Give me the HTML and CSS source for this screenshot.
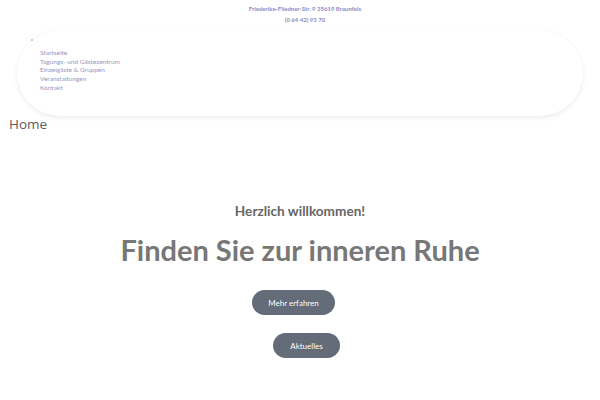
FILE: index.html
```html
<!DOCTYPE html>
<html lang="de">
<head>
<meta charset="utf-8">
<link rel="stylesheet" href="styles.css">
</head>
<body>
<header class="topbar">
  <div class="address">Friederike-Fliedner-Str. 9 35619 Braunfels</div>
  <div class="phone">(0 64 42) 93 70</div>
</header>
<nav class="navcard">
  <span class="dot"></span>
  <ul class="menu">
    <li>Startseite</li>
    <li>Tagungs- und Gästezentrum</li>
    <li>Einzelgäste &amp; Gruppen</li>
    <li>Veranstaltungen</li>
    <li>Kontakt</li>
  </ul>
</nav>
<h1 class="pagetitle">Home</h1>
<main class="hero">
  <h2 class="welcome">Herzlich willkommen!</h2>
  <h3 class="headline">Finden Sie zur inneren Ruhe</h3>
  <a class="btn btn-more">Mehr erfahren</a>
  <a class="btn btn-news">Aktuelles</a>
</main>
</body>
</html>
```
FILE: styles.css
```css
html, body {
  margin: 0;
  padding: 0;
  background: #ffffff;
  font-family: Lato, "Open Sans", sans-serif;
}
.topbar {
  display: flex;
  flex-direction: column;
  align-items: center;
  padding-top: 3px;
  padding-left: 10px;
  color: #8f89c4;
  font-weight: 700;
  font-size: 6px;
  line-height: 11px;
}
.navcard {
  position: relative;
  margin: 5px 17px 0 17px;
  height: 86px;
  border-radius: 43px;
  background: #fff;
  box-shadow: 0 2px 5px rgba(0,0,0,0.07), 0 0 1px rgba(0,0,0,0.05);
  box-sizing: border-box;
  padding: 19px 0 0 23px;
}
.dot {
  position: absolute;
  left: 14px;
  top: 9px;
  width: 2px;
  height: 2px;
  border-radius: 50%;
  background: #b8b6c8;
}
.menu {
  list-style: none;
  margin: 0;
  padding: 0;
  font-size: 6.5px;
  line-height: 8.7px;
  font-weight: 400;
  color: #9a96bc;
}
.pagetitle {
  margin: 0;
  padding: 0 0 0 9px;
  font-family: "Open Sans", sans-serif;
  font-weight: 400;
  font-size: 13.5px;
  line-height: 17px;
  color: #5a5a5a;
}
.hero {
  display: flex;
  flex-direction: column;
  align-items: center;
  padding-top: 69px;
}
.welcome {
  margin: 0;
  font-size: 13.6px;
  line-height: 18px;
  font-weight: 700;
  color: #666;
}
.headline {
  margin: 11px 0 0 0;
  font-size: 29px;
  line-height: 38px;
  font-weight: 700;
  color: #777;
}
.btn {
  display: flex;
  align-items: center;
  justify-content: center;
  height: 25px;
  border-radius: 13px;
  background: #646b79;
  color: #fff;
  font-size: 8px;
}
.btn-more {
  margin-top: 21px;
  width: 83px;
  margin-right: 13px;
}
.btn-news {
  margin-top: 18px;
  width: 67px;
  margin-left: 13px;
}
```
